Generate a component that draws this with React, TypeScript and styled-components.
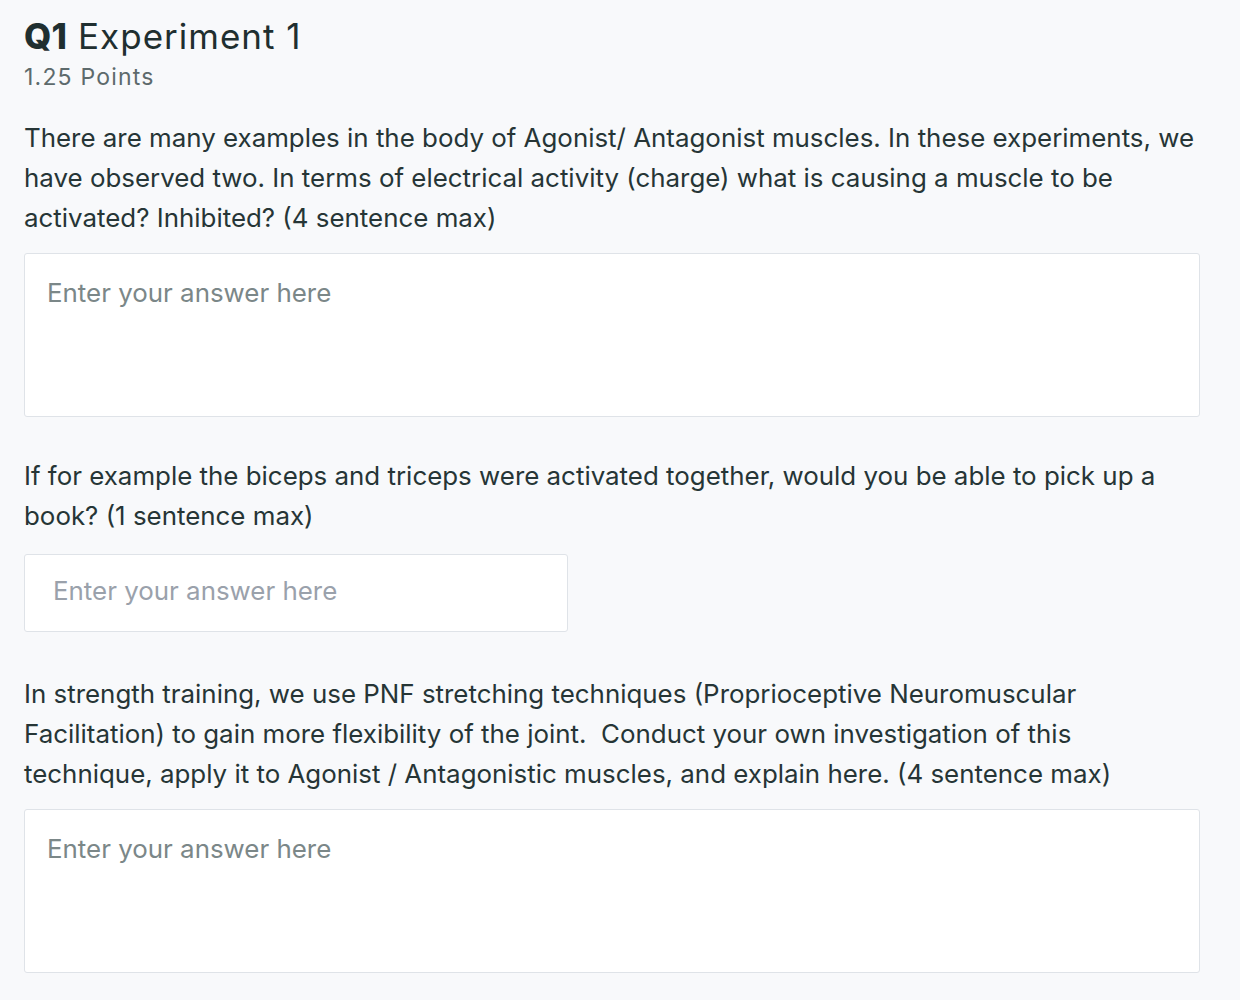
import React from "react";
import styled, { createGlobalStyle } from "styled-components";

const Global = createGlobalStyle`
  html, body { margin: 0; padding: 0; background: #f8f9fb; }
  body { font-family: Inter, "Open Sans", sans-serif; color: #263536; }
  * { box-sizing: border-box; }
`;

const Page = styled.main`
  padding: 15px 40px 26px 24px;
  width: 1240px;
  display: flex;
  flex-direction: column;
`;

const Header = styled.header`
  display: flex;
  flex-direction: column;
  margin-bottom: 26px;
`;

const Title = styled.h1`
  margin: 0;
  font-size: 35px;
  line-height: 42px;
  font-weight: 400;
  letter-spacing: 1px;
  color: #1f2f30;
`;

const QNum = styled.span`
  font-weight: 800;
  letter-spacing: 0.2px;
`;

const Points = styled.div`
  margin-top: 5px;
  font-size: 23px;
  line-height: 30px;
  letter-spacing: 1.2px;
  color: #5d6a6c;
`;

const Prompt = styled.p`
  margin: 0 0 15px 0;
  font-size: 25.9px;
  line-height: 40px;
  color: #263536;
`;

const Line = styled.span`
  display: block;
  white-space: nowrap;
`;

const Area = styled.textarea<{ $after?: number }>`
  display: block;
  width: 1176px;
  height: 164px;
  margin: 0 0 ${(p) => p.$after ?? 39}px 0;
  padding: 22px 22px;
  border: 1px solid #dfe3e8;
  border-radius: 3px;
  background: #fff;
  font-family: Inter, "Open Sans", sans-serif;
  font-size: 25.9px;
  line-height: 34px;
  resize: none;
  outline: none;
  &::placeholder { color: #7b8788; opacity: 1; }
`;

const Field = styled.input`
  display: block;
  width: 544px;
  height: 78px;
  margin: 3px 0 42px 0;
  padding: 0 28px 5px 28px;
  border: 1px solid #dfe3e8;
  border-radius: 3px;
  background: #fff;
  font-family: Inter, "Open Sans", sans-serif;
  font-size: 25.9px;
  outline: none;
  &::placeholder { color: #9aa1ab; opacity: 1; }
`;

export default function App() {
  return (
    <>
      <Global />
      <Page>
        <Header>
          <Title>
            <QNum>Q1</QNum> Experiment 1
          </Title>
          <Points>1.25 Points</Points>
        </Header>
        <Prompt>
          <Line>There are many examples in the body of Agonist/ Antagonist muscles. In these experiments, we</Line>
          <Line>have observed two. In terms of electrical activity (charge) what is causing a muscle to be</Line>
          <Line>activated? Inhibited? (4 sentence max)</Line>
        </Prompt>
        <Area placeholder="Enter your answer here" />
        <Prompt>
          <Line>If for example the biceps and triceps were activated together, would you be able to pick up a</Line>
          <Line>book? (1 sentence max)</Line>
        </Prompt>
        <Field placeholder="Enter your answer here" />
        <Prompt>
          <Line>In strength training, we use PNF stretching techniques (Proprioceptive Neuromuscular</Line>
          <Line>Facilitation) to gain more flexibility of the joint.&nbsp; Conduct your own investigation of this</Line>
          <Line>technique, apply it to Agonist / Antagonistic muscles, and explain here. (4 sentence max)</Line>
        </Prompt>
        <Area placeholder="Enter your answer here" $after={0} />
      </Page>
    </>
  );
}
